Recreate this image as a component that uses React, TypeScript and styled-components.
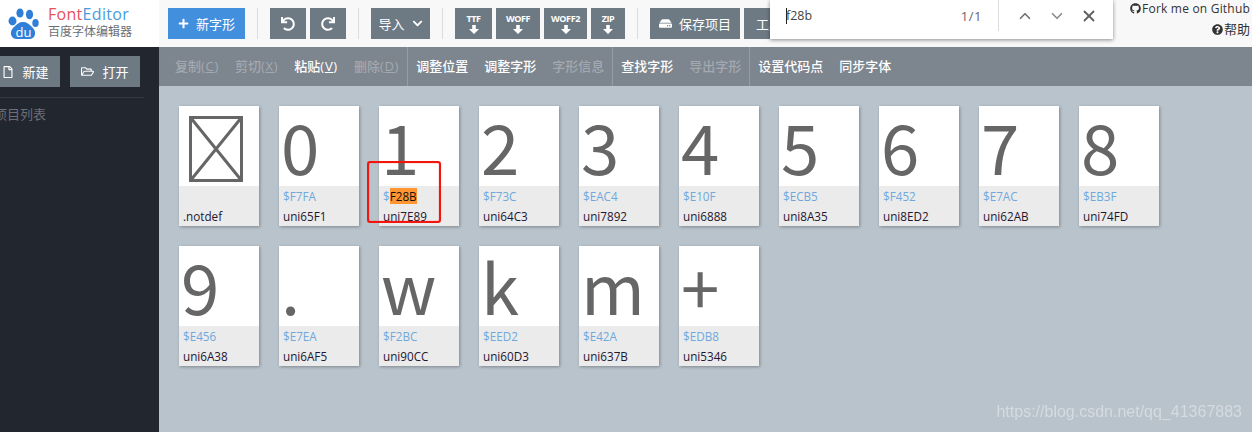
import styled, { createGlobalStyle } from 'styled-components';
import { FaChevronDown, FaGithub, FaHdd, FaPlus, FaQuestionCircle, FaRedo, FaRegFile, FaRegFolderOpen, FaUndo } from 'react-icons/fa';
import { ChevronDown, ChevronUp, X } from 'lucide-react';

const menuGroups = [
  [
    { label: '复制', key: 'C', disabled: true },
    { label: '剪切', key: 'X', disabled: true },
    { label: '粘贴', key: 'V' },
    { label: '删除', key: 'D', disabled: true },
  ],
  [{ label: '调整位置' }, { label: '调整字形' }, { label: '字形信息', disabled: true }],
  [{ label: '查找字形' }, { label: '导出字形', disabled: true }],
  [{ label: '设置代码点' }, { label: '同步字体' }],
];

const glyphs = [
  { char: '', code: '', name: '.notdef' },
  { char: '0', code: 'F7FA', name: 'uni65F1' },
  { char: '1', code: 'F28B', name: 'uni7E89', hit: true },
  { char: '2', code: 'F73C', name: 'uni64C3' },
  { char: '3', code: 'EAC4', name: 'uni7892' },
  { char: '4', code: 'E10F', name: 'uni6888' },
  { char: '5', code: 'ECB5', name: 'uni8A35' },
  { char: '6', code: 'F452', name: 'uni8ED2' },
  { char: '7', code: 'E7AC', name: 'uni62AB' },
  { char: '8', code: 'EB3F', name: 'uni74FD' },
  { char: '9', code: 'E456', name: 'uni6A38' },
  { char: '.', code: 'E7EA', name: 'uni6AF5' },
  { char: 'w', code: 'F2BC', name: 'uni90CC' },
  { char: 'k', code: 'EED2', name: 'uni60D3' },
  { char: 'm', code: 'E42A', name: 'uni637B' },
  { char: '+', code: 'EDB8', name: 'uni5346' },
];

const exportFormats = [
  { label: 'TTF', width: 37 },
  { label: 'WOFF', width: 44 },
  { label: 'WOFF2', width: 43 },
  { label: 'ZIP', width: 34 },
];

const App = () => {
  return (
    <Page>
      <GlobalStyle />
      <Header>
        <Logo>
          <svg width="32" height="34" viewBox="8 5 32 34">
            <g fill="#2f7fd8">
              <ellipse cx="12.5" cy="19" rx="4" ry="4.4" />
              <ellipse cx="20" cy="11" rx="3.6" ry="4.6" />
              <ellipse cx="29.5" cy="12.5" rx="3.6" ry="4.8" />
              <ellipse cx="35.5" cy="21" rx="3.2" ry="4" />
              <path d="M23 20c4 0 6 2 9 5 5 4 4 12-3 12H17c-7 0-8-8-3-12 3-3 5-5 9-5z" />
            </g>
            <text x="23.5" y="35" textAnchor="middle" fill="#fff" fontSize="13" fontFamily="'Open Sans', sans-serif">
              du
            </text>
          </svg>
          <LogoText>
            <LogoTitle>
              <LogoFont>Font</LogoFont>
              <LogoEditor>Editor</LogoEditor>
            </LogoTitle>
            <LogoSub>百度字体编辑器</LogoSub>
          </LogoText>
        </Logo>
        <Toolbar>
          <ToolButton $primary $width={77}>
            <FaPlus size={11} />
            新字形
          </ToolButton>
          <ToolSeparator />
          <ToolGroup>
            <ToolButton $width={36}>
              <FaUndo size={14} />
            </ToolButton>
            <ToolButton $width={36}>
              <FaRedo size={14} />
            </ToolButton>
          </ToolGroup>
          <ToolSeparator />
          <ToolButton $width={59}>
            导入
            <FaChevronDown size={11} />
          </ToolButton>
          <ToolSeparator />
          <ToolGroup>
            {exportFormats.map(format => (
              <ExportButton key={format.label} $width={format.width}>
                <ExportLabel>{format.label}</ExportLabel>
                <svg width="10" height="9" viewBox="0 0 10 9">
                  <path d="M3.2 0h3.6v4H10L5 9 0 4h3.2z" fill="#fff" />
                </svg>
              </ExportButton>
            ))}
          </ToolGroup>
          <ToolSeparator />
          <ToolGroup>
            <ToolButton $width={90}>
              <FaHdd size={13} />
              保存项目
            </ToolButton>
            <ToolButton $width={50}>工具</ToolButton>
          </ToolGroup>
        </Toolbar>
        <HeaderLinks>
          <HeaderLink>
            <FaGithub size={11} />
            Fork me on Github
          </HeaderLink>
          <HeaderLink>
            <FaQuestionCircle size={11} />
            <HelpText>帮助</HelpText>
          </HeaderLink>
        </HeaderLinks>
        <FindBar>
          <FindInput>
            <Caret />
            f28b
          </FindInput>
          <FindCount>1/1</FindCount>
          <FindDivider />
          <FindActions>
            <ChevronUp size={18} color="#6f6f6f" strokeWidth={2.2} />
            <ChevronDown size={18} color="#8a8a8a" strokeWidth={2.2} />
            <X size={18} color="#5f5f5f" strokeWidth={2.4} />
          </FindActions>
        </FindBar>
      </Header>
      <Body>
        <Sidebar>
          <SidebarButtons>
            <SidebarButton $width={75} $inset={6}>
              <FaRegFile size={12} />
              新建
            </SidebarButton>
            <SidebarButton $width={70}>
              <FaRegFolderOpen size={13} />
              打开
            </SidebarButton>
          </SidebarButtons>
          <SidebarTitle>项目列表</SidebarTitle>
        </Sidebar>
        <Main>
          <MenuBar>
            {menuGroups.map((group, groupIndex) => (
              <MenuGroup key={groupIndex}>
                {group.map(item => (
                  <MenuItem key={item.label} $disabled={item.disabled}>
                    {item.label}
                    {item.key && (
                      <MenuKey>
                        (<u>{item.key}</u>)
                      </MenuKey>
                    )}
                  </MenuItem>
                ))}
              </MenuGroup>
            ))}
          </MenuBar>
          <GlyphGrid>
            {glyphs.map(glyph => (
              <GlyphCard key={glyph.name}>
                <GlyphFace>
                  {glyph.char === '' ? (
                    <NotdefBox width="54" height="66" viewBox="0 0 54 66">
                      <path d="M1.5 1.5h51v63h-51zM1.5 1.5l51 63M52.5 1.5l-51 63" fill="none" stroke="#666" strokeWidth="3" />
                    </NotdefBox>
                  ) : (
                    <GlyphChar>{glyph.char}</GlyphChar>
                  )}
                </GlyphFace>
                <GlyphInfo>
                  <GlyphCode>
                    {glyph.code && '$'}
                    {glyph.hit ? <Match>{glyph.code}</Match> : glyph.code}
                  </GlyphCode>
                  <GlyphName>{glyph.name}</GlyphName>
                </GlyphInfo>
              </GlyphCard>
            ))}
          </GlyphGrid>
          <RedMark />
          <Watermark>https://blog.csdn.net/qq_41367883</Watermark>
        </Main>
      </Body>
    </Page>
  );
};

export default App;

const GlobalStyle = createGlobalStyle`
  html, body {
    margin: 0;
    height: 100%;
    overflow: hidden;
  }

  body {
    font-family: 'Open Sans', 'Noto Sans CJK SC', sans-serif;
  }
`;

const Page = styled.div`
  display: flex;
  flex-direction: column;
  width: 1252px;
  height: 432px;
  overflow: hidden;
`;

const Header = styled.header`
  position: relative;
  display: flex;
  flex: none;
  height: 47px;
  background: #f8f8f8;
`;

const Logo = styled.div`
  display: flex;
  flex: none;
  align-items: center;
  column-gap: 8px;
  width: 159px;
  padding-left: 8px;
  box-sizing: border-box;
  background: #fff;
`;

const LogoText = styled.div`
  display: flex;
  flex-direction: column;
  margin-top: -4px;
`;

const LogoTitle = styled.div`
  font-size: 16px;
  line-height: 20px;
  letter-spacing: 0.3px;
`;

const LogoFont = styled.span`
  color: #e8505b;
`;

const LogoEditor = styled.span`
  color: #4a9bdc;
`;

const LogoSub = styled.div`
  font-size: 12px;
  line-height: 15px;
  color: #6b6f75;
`;

const Toolbar = styled.div`
  display: flex;
  align-items: flex-start;
  column-gap: 12px;
  padding: 8px 0 0 9px;
`;

const ToolGroup = styled.div`
  display: flex;
  column-gap: 4px;
`;

const ToolButton = styled.div<{ $primary?: boolean; $width: number }>`
  display: flex;
  align-items: center;
  justify-content: center;
  column-gap: 7px;
  width: ${({ $width }) => $width}px;
  height: 31px;
  color: #fff;
  font-size: 13px;
  background: ${({ $primary }) => ($primary ? '#428fde' : '#6d7a84')};
`;

const ExportButton = styled.div<{ $width: number }>`
  display: flex;
  flex-direction: column;
  align-items: center;
  justify-content: center;
  row-gap: 1px;
  width: ${({ $width }) => $width}px;
  height: 31px;
  color: #fff;
  background: #6d7a84;
`;

const ExportLabel = styled.span`
  font-size: 9px;
  line-height: 10px;
  font-weight: 700;
  letter-spacing: -0.4px;
`;

const ToolSeparator = styled.div`
  width: 1px;
  height: 31px;
  background: #dcdcdc;
`;

const HeaderLinks = styled.div`
  position: absolute;
  top: 0;
  right: 2px;
  display: flex;
  flex-direction: column;
  align-items: flex-end;
  row-gap: 6px;
  padding-top: 1px;
`;

const HeaderLink = styled.div`
  display: flex;
  align-items: center;
  column-gap: 1px;
  font-size: 12px;
  line-height: 15px;
  letter-spacing: 0.2px;
  color: #333;
`;

const HelpText = styled.span`
  font-size: 13px;
  letter-spacing: 0;
`;

const FindBar = styled.div`
  position: absolute;
  top: 0;
  left: 770px;
  display: flex;
  align-items: center;
  width: 343px;
  height: 31px;
  padding-bottom: 8px;
  background: #fff;
  box-shadow: 0 1px 4px rgba(0, 0, 0, 0.45);
`;

const FindInput = styled.div`
  display: flex;
  flex: 1;
  align-items: center;
  padding-left: 16px;
  font-size: 12.5px;
  color: #444;
`;

const Caret = styled.span`
  width: 1px;
  height: 16px;
  margin-right: -1px;
  background: #222;
`;

const FindCount = styled.span`
  font-size: 13px;
  letter-spacing: 0.5px;
  color: #666;
  margin-right: 16px;
`;

const FindDivider = styled.div`
  width: 1px;
  height: 31px;
  background: #ddd;
`;

const FindActions = styled.div`
  display: flex;
  align-items: center;
  column-gap: 14px;
  padding: 0 15px 0 17px;
`;

const Body = styled.div`
  display: flex;
  flex: 1;
  min-height: 0;
`;

const Sidebar = styled.aside`
  flex: none;
  width: 159px;
  overflow: hidden;
  background: #22262f;
`;

const SidebarButtons = styled.div`
  display: flex;
  column-gap: 10px;
  width: 159px;
  margin-left: -15px;
  padding: 9px 0 10px;
  border-bottom: 1px solid #343842;
`;

const SidebarButton = styled.div<{ $width: number; $inset?: number }>`
  display: flex;
  flex: none;
  align-items: center;
  justify-content: center;
  column-gap: 8px;
  width: ${({ $width }) => $width}px;
  height: 31px;
  padding-left: ${({ $inset }) => $inset ?? 0}px;
  box-sizing: border-box;
  color: #fff;
  font-size: 13px;
  background: #6d7a84;
`;

const SidebarTitle = styled.div`
  margin: 6px 0 0 -6px;
  font-size: 13px;
  line-height: 20px;
  color: #6a6f78;
`;

const Main = styled.main`
  position: relative;
  display: flex;
  flex: 1;
  flex-direction: column;
  min-width: 0;
  background: #b8c3cc;
`;

const MenuBar = styled.nav`
  display: flex;
  flex: none;
  height: 39px;
  background: #7d858e;
`;

const MenuGroup = styled.div`
  display: flex;
  align-items: center;
  column-gap: 16px;
  padding: 0 8px 2px;
  border-right: 1px solid #959ca4;

  &:first-child {
    padding-left: 16px;
  }

  &:last-child {
    border-right: 0;
  }
`;

const MenuItem = styled.span<{ $disabled?: boolean }>`
  font-size: 13px;
  font-weight: 500;
  white-space: nowrap;
  color: ${({ $disabled }) => ($disabled ? '#a3a9b0' : '#fff')};
`;

const MenuKey = styled.span`
  letter-spacing: 0.7px;
`;

const GlyphGrid = styled.div`
  display: flex;
  flex-wrap: wrap;
  align-content: flex-start;
  gap: 20px;
  padding: 20px 0 0 20px;
`;

const GlyphCard = styled.div`
  width: 80px;
  height: 120px;
  background: #fff;
  box-shadow: 1px 1px 3px rgba(0, 0, 0, 0.3);
`;

const GlyphFace = styled.div`
  display: flex;
  height: 80px;
  overflow: hidden;
  padding-left: 2px;
`;

const GlyphChar = styled.span`
  font-family: 'Noto Sans CJK SC', sans-serif;
  font-size: 69px;
  line-height: 78px;
  color: #666;
`;

const NotdefBox = styled.svg`
  margin: 10px 0 0 8px;
`;

const GlyphInfo = styled.div`
  height: 40px;
  padding-left: 4px;
  background: #ebebeb;
  font-size: 11.7px;
  line-height: 20px;
`;

const GlyphCode = styled.div`
  height: 20px;
  color: #6fa8dc;
`;

const Match = styled.span`
  color: #111;
  background: #ff9632;
`;

const GlyphName = styled.div`
  color: #1f1630;
`;

const RedMark = styled.div`
  position: absolute;
  top: 114px;
  left: 208px;
  width: 70px;
  height: 58px;
  border: 2px solid #f5140c;
  border-radius: 3px;
  box-shadow: inset 0 0 1px #f5140c;
`;

const Watermark = styled.div`
  position: absolute;
  right: 10px;
  bottom: 11px;
  font-family: 'Liberation Sans', sans-serif;
  font-size: 16px;
  color: #d5dbe0;
  filter: blur(0.5px);
`;
